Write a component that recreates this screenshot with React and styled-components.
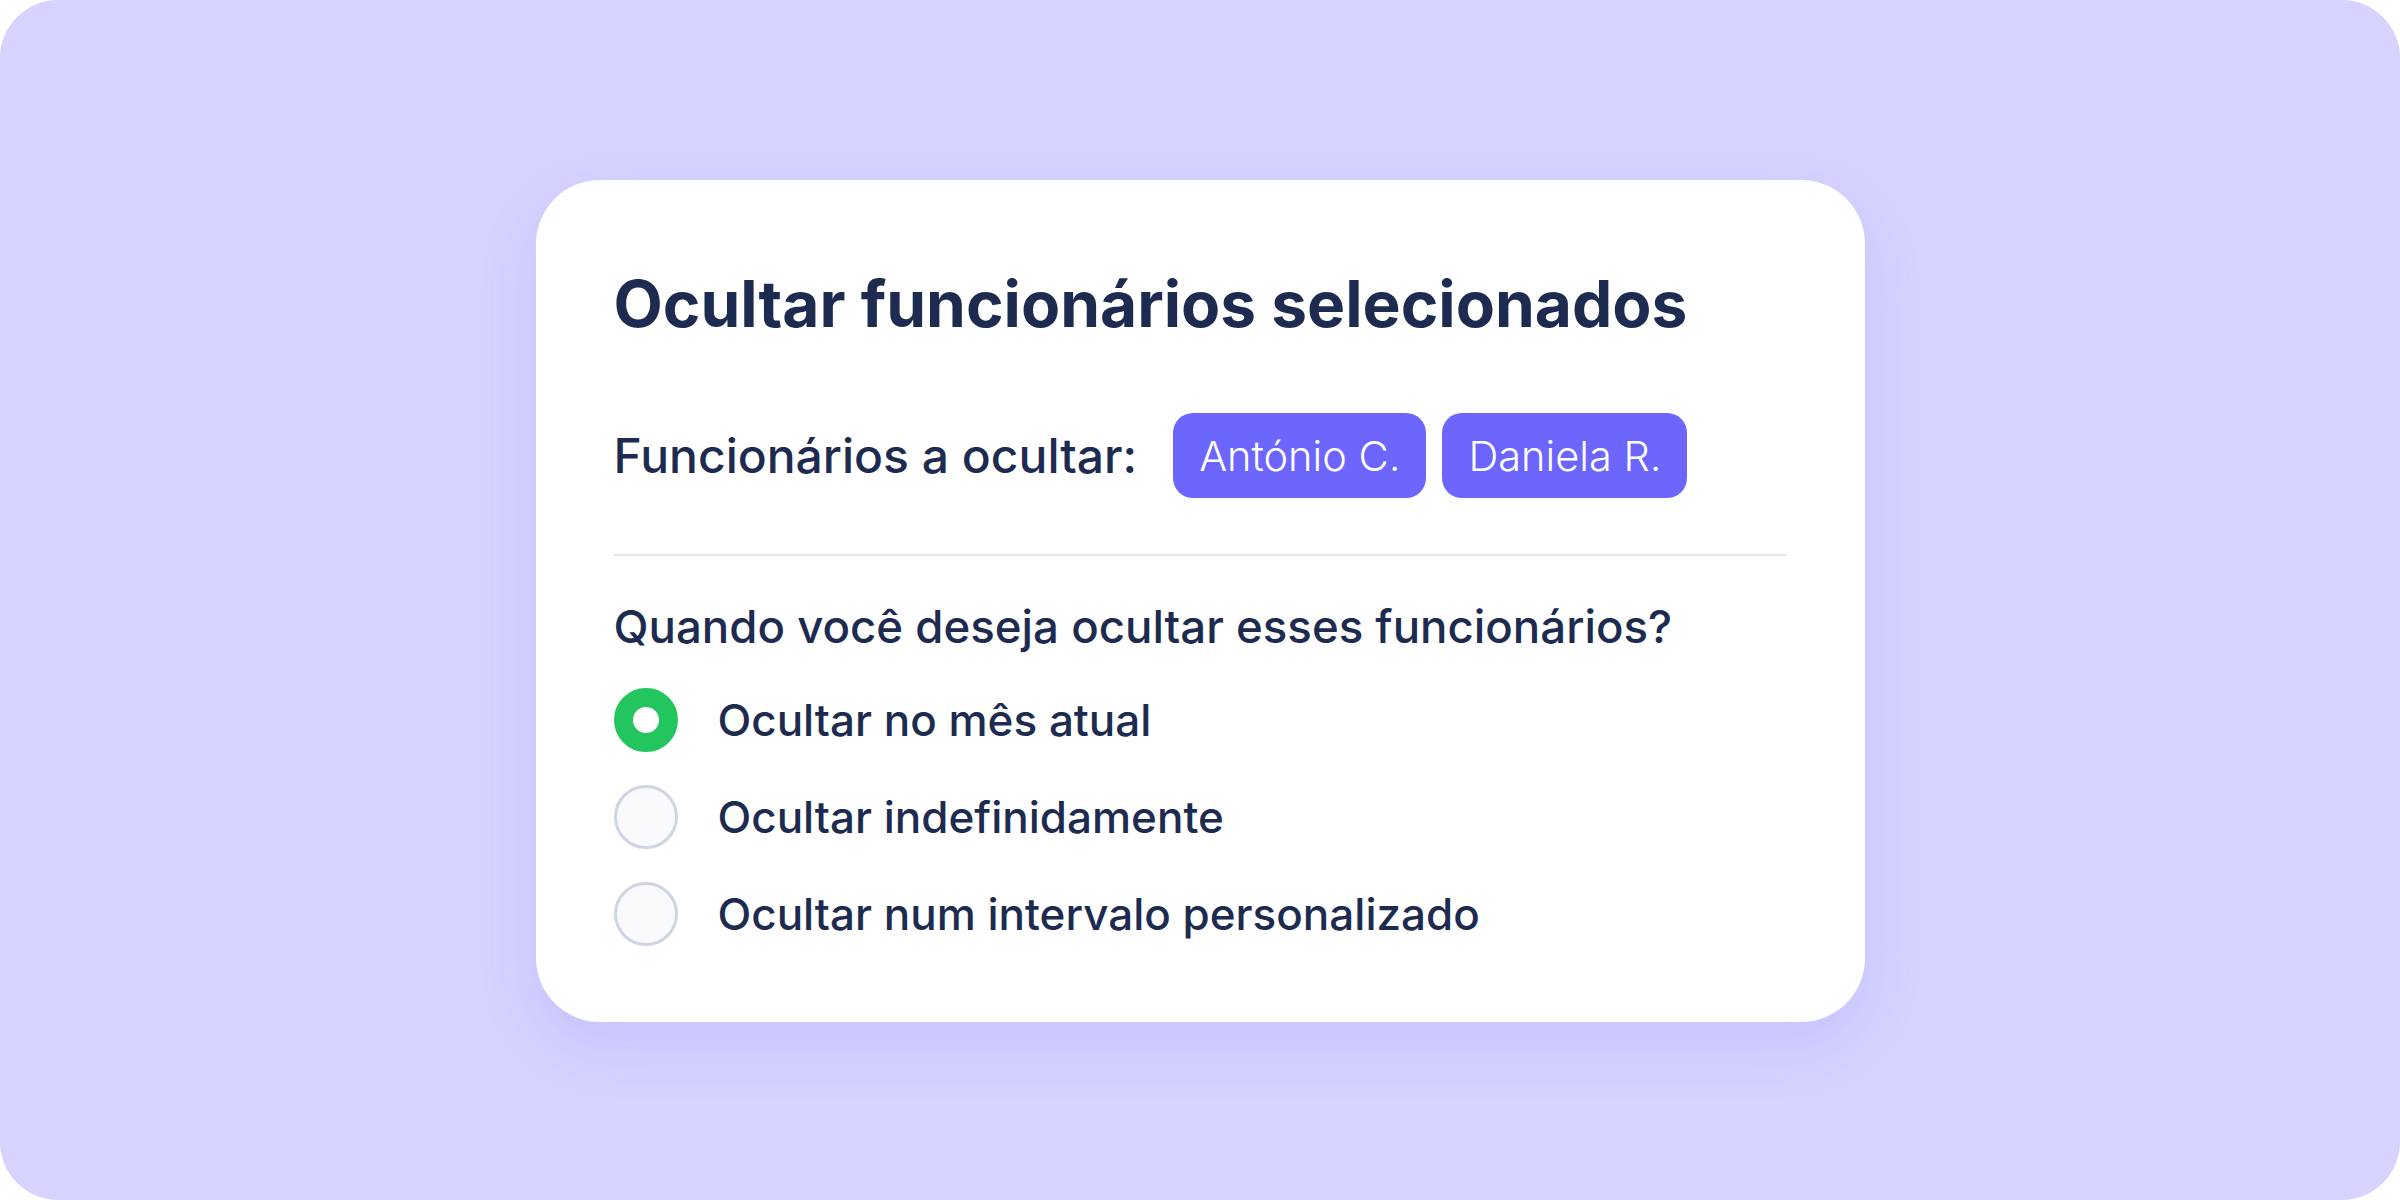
import React, { useState } from 'react';
import styled, { createGlobalStyle } from 'styled-components';

const GlobalStyle = createGlobalStyle`
  html, body {
    margin: 0;
    padding: 0;
    background: #ffffff;
  }
  body {
    font-family: Inter, 'Noto Sans', sans-serif;
    -webkit-font-smoothing: antialiased;
  }
`;

const Stage = styled.main`
  width: 2400px;
  height: 1200px;
  background: #d6d3ff;
  border-radius: 58px;
  display: flex;
  align-items: flex-start;
  justify-content: center;
  padding-top: 180px;
  box-sizing: border-box;
`;

const Card = styled.section`
  width: 1329px;
  box-sizing: border-box;
  background: #ffffff;
  border-radius: 64px;
  padding: 92px 78px 76px;
  box-shadow: 0 24px 60px rgba(108, 100, 255, 0.14);
  color: #1e2b50;
`;

const Title = styled.h1`
  margin: 0;
  font-size: 64px;
  line-height: 1;
  font-weight: 700;
  letter-spacing: 0;
`;

const SelectedRow = styled.div`
  display: flex;
  align-items: center;
  margin-top: 77px;
`;

const RowLabel = styled.span`
  font-size: 48px;
  font-weight: 500;
  margin-right: 36px;
`;

const Chips = styled.div`
  display: flex;
  gap: 16px;
`;

const Chip = styled.span`
  display: inline-flex;
  align-items: center;
  height: 85px;
  padding: 0 26px;
  border-radius: 20px;
  background: #6c66ff;
  color: #ffffff;
  font-size: 41.5px;
  font-weight: 300;
`;

const Divider = styled.hr`
  border: none;
  height: 2px;
  background: #e3e8f0;
  margin: 56px 0 0;
`;

const Question = styled.h2`
  margin: 44px 0 0;
  font-size: 45.6px;
  line-height: 1.2;
  font-weight: 500;
`;

const Options = styled.div`
  display: flex;
  flex-direction: column;
  gap: 33px;
  margin-top: 33px;
`;

const Option = styled.label`
  display: flex;
  align-items: center;
  gap: 40px;
  cursor: pointer;
  font-size: 44px;
  font-weight: 500;
`;

const Radio = styled.span`
  width: 64px;
  height: 64px;
  flex: none;
  box-sizing: border-box;
  border-radius: 50%;
  border: ${p => (p.checked ? '19px solid #22c55e' : '3px solid #cdd6e2')};
  background: ${p => (p.checked ? '#ffffff' : '#f8fafc')};
`;

const options = [
  'Ocultar no mês atual',
  'Ocultar indefinidamente',
  'Ocultar num intervalo personalizado',
];

export default function App() {
  const [selected, setSelected] = useState(0);

  return (
    <>
      <GlobalStyle />
      <Stage>
        <Card>
          <Title>Ocultar funcionários selecionados</Title>

          <SelectedRow>
            <RowLabel>Funcionários a ocultar:</RowLabel>
            <Chips>
              <Chip>António C.</Chip>
              <Chip>Daniela R.</Chip>
            </Chips>
          </SelectedRow>

          <Divider />

          <Question>Quando você deseja ocultar esses funcionários?</Question>

          <Options>
            {options.map((label, i) => (
              <Option key={label} onClick={() => setSelected(i)}>
                <Radio checked={selected === i} />
                {label}
              </Option>
            ))}
          </Options>
        </Card>
      </Stage>
    </>
  );
}
